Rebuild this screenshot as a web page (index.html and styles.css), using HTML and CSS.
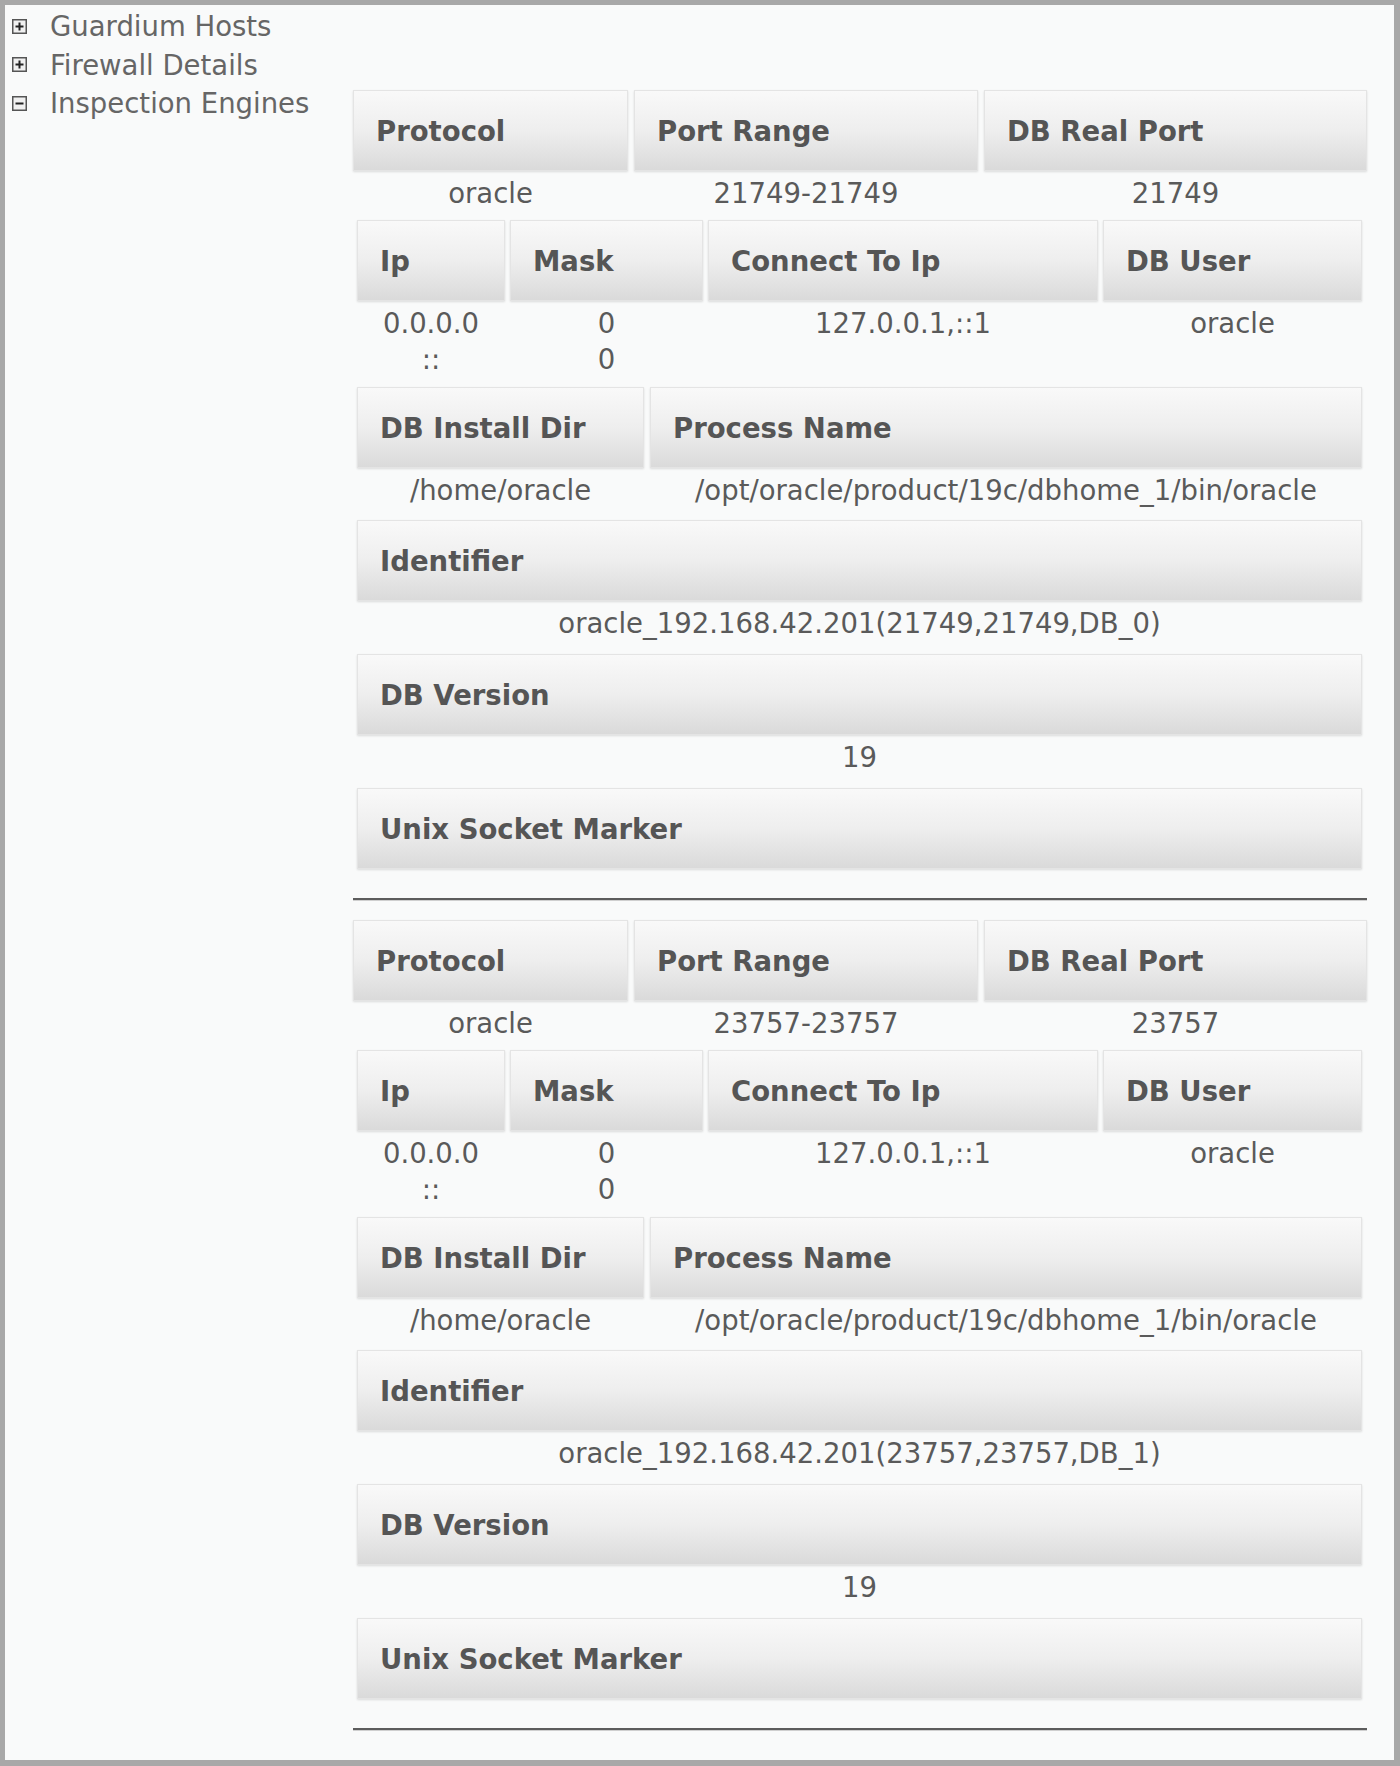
FILE: index.html
```html
<!DOCTYPE html>
<html>
<head>
<meta charset="utf-8">
<link rel="stylesheet" href="styles.css">
</head>
<body>
<div class="frame">
  <div class="layout">
    <ul class="tree">
      <li class="node"><svg class="toggle" width="15" height="15" viewBox="0 0 15 15"><rect x="0.75" y="0.75" width="13.5" height="13.5" fill="#f0f0f0" stroke="#555" stroke-width="1.5"/><path d="M3.5 7.5H11.5M7.5 3.5V11.5" stroke="#222" stroke-width="2"/></svg><span>Guardium Hosts</span></li>
      <li class="node"><svg class="toggle" width="15" height="15" viewBox="0 0 15 15"><rect x="0.75" y="0.75" width="13.5" height="13.5" fill="#f0f0f0" stroke="#555" stroke-width="1.5"/><path d="M3.5 7.5H11.5M7.5 3.5V11.5" stroke="#222" stroke-width="2"/></svg><span>Firewall Details</span></li>
      <li class="node"><svg class="toggle" width="15" height="15" viewBox="0 0 15 15"><rect x="0.75" y="0.75" width="13.5" height="13.5" fill="#f0f0f0" stroke="#555" stroke-width="1.5"/><path d="M3.5 7.5H11.5" stroke="#222" stroke-width="2"/></svg><span>Inspection Engines</span></li>
    </ul>
    <div class="content">
      <div class="engine">
        <div class="sec sec-proto">
          <div class="hd">Protocol</div><div class="hd">Port Range</div><div class="hd">DB Real Port</div>
          <div class="dt">oracle</div><div class="dt">21749-21749</div><div class="dt">21749</div>
        </div>
        <div class="sec sec-ip inset">
          <div class="hd">Ip</div><div class="hd">Mask</div><div class="hd">Connect To Ip</div><div class="hd">DB User</div>
          <div class="dt">0.0.0.0<br>::</div><div class="dt">0<br>0</div><div class="dt">127.0.0.1,::1</div><div class="dt">oracle</div>
        </div>
        <div class="sec sec-dir inset">
          <div class="hd">DB Install Dir</div><div class="hd">Process Name</div>
          <div class="dt">/home/oracle</div><div class="dt">/opt/oracle/product/19c/dbhome_1/bin/oracle</div>
        </div>
        <div class="sec sec-one inset">
          <div class="hd">Identifier</div>
          <div class="dt">oracle_192.168.42.201(21749,21749,DB_0)</div>
        </div>
        <div class="sec sec-one inset">
          <div class="hd">DB Version</div>
          <div class="dt">19</div>
        </div>
        <div class="sec sec-one inset last">
          <div class="hd">Unix Socket Marker</div>
        </div>
      </div>
      <div class="sep"></div>
      <div class="engine">
        <div class="sec sec-proto">
          <div class="hd">Protocol</div><div class="hd">Port Range</div><div class="hd">DB Real Port</div>
          <div class="dt">oracle</div><div class="dt">23757-23757</div><div class="dt">23757</div>
        </div>
        <div class="sec sec-ip inset">
          <div class="hd">Ip</div><div class="hd">Mask</div><div class="hd">Connect To Ip</div><div class="hd">DB User</div>
          <div class="dt">0.0.0.0<br>::</div><div class="dt">0<br>0</div><div class="dt">127.0.0.1,::1</div><div class="dt">oracle</div>
        </div>
        <div class="sec sec-dir inset">
          <div class="hd">DB Install Dir</div><div class="hd">Process Name</div>
          <div class="dt">/home/oracle</div><div class="dt">/opt/oracle/product/19c/dbhome_1/bin/oracle</div>
        </div>
        <div class="sec sec-one inset">
          <div class="hd">Identifier</div>
          <div class="dt">oracle_192.168.42.201(23757,23757,DB_1)</div>
        </div>
        <div class="sec sec-one inset">
          <div class="hd">DB Version</div>
          <div class="dt">19</div>
        </div>
        <div class="sec sec-one inset last">
          <div class="hd">Unix Socket Marker</div>
        </div>
      </div>
      <div class="sep"></div>
    </div>
  </div>
</div>
</body>
</html>
```
FILE: styles.css
```css
html, body {
  margin: 0;
  padding: 0;
  background: #ffffff;
}
body {
  font-family: "DejaVu Sans", "Liberation Sans", sans-serif;
  font-size: 27.5px;
  color: #555;
}
.frame {
  box-sizing: border-box;
  width: 1400px;
  height: 1766px;
  border-style: solid;
  border-color: #a8a8a8;
  border-width: 5px 6px 6px 5px;
  background: #ffffff;
  overflow: hidden;
}
.layout {
  display: flex;
  background: #f9fafa;
  padding-bottom: 14px;
}
.tree {
  list-style: none;
  margin: 0;
  padding: 2px 0 0 0;
  width: 348px;
  flex: none;
}
.node {
  display: flex;
  align-items: center;
  height: 38.5px;
  color: #666;
  white-space: nowrap;
}
.toggle {
  margin-left: 7px;
  margin-right: 23px;
  flex: none;
}
.content {
  width: 1014px;
  margin-top: 85px;
  flex: none;
}
.sec {
  display: grid;
  column-gap: 6px;
  margin-bottom: 8px;
}
.sec.inset {
  margin-left: 4px;
  margin-right: 5px;
}
.sec-proto {
  grid-template-columns: 275px 344px 383px;
  margin-bottom: 5px;
}
.sec-ip {
  grid-template-columns: 148px 193px 390px 259px;
  column-gap: 5px;
  margin-bottom: 6px;
}
.sec-dir {
  grid-template-columns: 287px 712px;
}
.sec-one {
  grid-template-columns: 1fr;
  margin-bottom: 9px;
}
.sec.last {
  margin-bottom: 0;
}
.hd {
  box-sizing: border-box;
  height: 81px;
  display: flex;
  align-items: center;
  padding-left: 22px;
  font-weight: bold;
  color: #555;
  background: linear-gradient(to bottom, #f9f9f9 0%, #eeeeee 50%, #dadada 100%);
  border: 1px solid #e4e4e4;
  box-shadow: 0 1px 2px rgba(0, 0, 0, 0.12);
  white-space: nowrap;
}
.dt {
  padding: 4px 0;
  line-height: 36px;
  text-align: center;
  color: #5a5a5a;
  white-space: nowrap;
}
.sep {
  height: 2px;
  background: #5c5c5c;
  border-bottom: 1px solid #cfcfcf;
  margin: 29px 0 19px 0;
}
```
